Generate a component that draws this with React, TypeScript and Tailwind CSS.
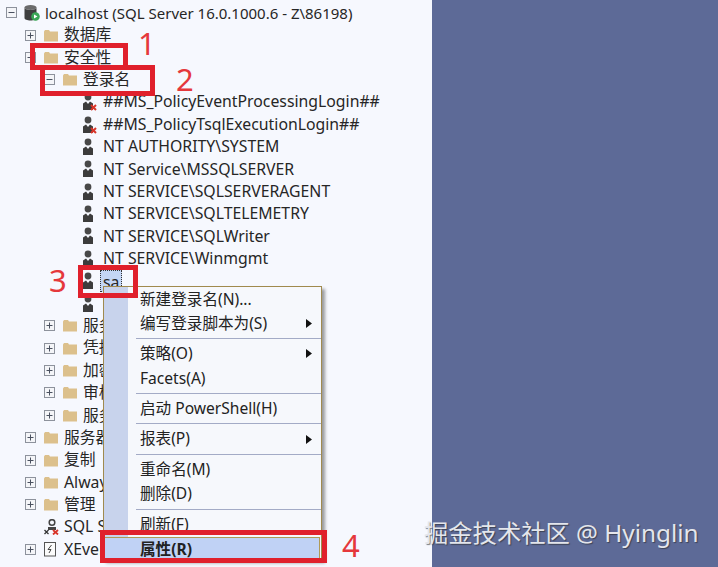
import React from 'react';

const FONT = '"Noto Sans", "Noto Sans CJK SC", sans-serif';

const Expander = ({ open }: { open: boolean }) => (
  <svg width="11" height="11" viewBox="0 0 11 11" className="shrink-0">
    <rect x="0.5" y="0.5" width="10" height="10" fill="#f4f5f8" stroke="#8d929c" />
    <path d="M2.5 5.5h6" stroke="#4a5160" />
    {!open && <path d="M5.5 2.5v6" stroke="#4a5160" />}
  </svg>
);

const Folder = () => (
  <svg width="14" height="13" viewBox="0 0 14 13" className="shrink-0">
    <path d="M0 2.5 L1 1 H5 L6 2.5 H14 V12.5 H0 Z" fill="#dcc08c" />
  </svg>
);

const UserIcon = ({ denied }: { denied?: boolean }) => (
  <svg width="16" height="18" viewBox="0 0 16 18" className="shrink-0">
    <circle cx="7" cy="4" r="3.4" fill="#484848" />
    <path d="M2 17V10.5 L5 8.5 L7 11 L9 8.5 L12 10.5 V17 Z" fill="#3c3c3c" />
    {denied && <path d="M10 12l5 5M15 12l-5 5" stroke="#d8352a" strokeWidth="2" />}
  </svg>
);

const ServerIcon = () => (
  <svg width="16" height="17" viewBox="0 0 16 17" className="shrink-0">
    <ellipse cx="6.500" cy="3.500" rx="6" ry="2.500" fill="#6b6b6b" />
    <path d="M0.500 3.500V14c0 1.400 2.700 2.500 6 2.500s6-1.100 6-2.500V3.500c0 1.400-2.700 2.500-6 2.500S0.500 4.900 0.500 3.500Z" fill="#3f3f3f" />
    <circle cx="11.500" cy="12.500" r="4.300" fill="#3aa655" />
    <path d="M10 10.400v4.200l3.500-2.100Z" fill="#fff" />
  </svg>
);

const AgentIcon = () => (
  <svg width="15" height="16" viewBox="0 0 15 16" className="shrink-0">
    <circle cx="8" cy="3.500" r="2.800" fill="none" stroke="#444" strokeWidth="1.500" />
    <path d="M4 8h8v3H4Z" fill="#444" />
    <path d="M0.500 11l4 4M4.500 11l-4 4" stroke="#333" strokeWidth="1.300" />
    <path d="M9 11l5 4.500M14 11l-5 4.500" stroke="#d8352a" strokeWidth="1.800" />
  </svg>
);

const XEventIcon = () => (
  <svg width="13" height="15" viewBox="0 0 13 15" className="shrink-0">
    <rect x="0.500" y="0.500" width="11" height="13.500" fill="#fbfbfb" stroke="#555" />
    <path d="M7.500 3L4 7.500h3L5 11" fill="none" stroke="#444" />
  </svg>
);

type Node = {
  label: string;
  indent: number;
  kind: 'server' | 'folder' | 'user' | 'denied' | 'agent' | 'xevent';
  open?: boolean;
  selected?: boolean;
};

const nodes: Node[] = [
  { label: 'localhost (SQL Server 16.0.1000.6 - Z\\86198)', indent: 6, kind: 'server', open: true },
  { label: '数据库', indent: 25, kind: 'folder', open: false },
  { label: '安全性', indent: 25, kind: 'folder', open: true },
  { label: '登录名', indent: 44, kind: 'folder', open: true },
  { label: '##MS_PolicyEventProcessingLogin##', indent: 81, kind: 'denied' },
  { label: '##MS_PolicyTsqlExecutionLogin##', indent: 81, kind: 'denied' },
  { label: 'NT AUTHORITY\\SYSTEM', indent: 81, kind: 'user' },
  { label: 'NT Service\\MSSQLSERVER', indent: 81, kind: 'user' },
  { label: 'NT SERVICE\\SQLSERVERAGENT', indent: 81, kind: 'user' },
  { label: 'NT SERVICE\\SQLTELEMETRY', indent: 81, kind: 'user' },
  { label: 'NT SERVICE\\SQLWriter', indent: 81, kind: 'user' },
  { label: 'NT SERVICE\\Winmgmt', indent: 81, kind: 'user' },
  { label: 'sa', indent: 81, kind: 'user', selected: true },
  { label: '', indent: 81, kind: 'user' },
  { label: '服务器角色', indent: 44, kind: 'folder', open: false },
  { label: '凭据', indent: 44, kind: 'folder', open: false },
  { label: '加密提供程序', indent: 44, kind: 'folder', open: false },
  { label: '审核', indent: 44, kind: 'folder', open: false },
  { label: '服务器审核规范', indent: 44, kind: 'folder', open: false },
  { label: '服务器对象', indent: 25, kind: 'folder', open: false },
  { label: '复制', indent: 25, kind: 'folder', open: false },
  { label: 'Always On 高可用性', indent: 25, kind: 'folder', open: false },
  { label: '管理', indent: 25, kind: 'folder', open: false },
  { label: 'SQL Server 代理', indent: 44, kind: 'agent' },
  { label: 'XEvent 探查器', indent: 25, kind: 'xevent', open: false },
];

const TreeRow = ({ node }: { node: Node }) => {
  return (
    <div className="flex items-center h-[22.36px] whitespace-nowrap" style={{ paddingLeft: node.indent }}>
      {node.open !== undefined && (
        <span className="mr-2">
          <Expander open={node.open} />
        </span>
      )}
      {node.kind === 'server' && <span className="mr-[5px] -ml-[1px]"><ServerIcon /></span>}
      {node.kind === 'folder' && <span className="mr-[6px]"><Folder /></span>}
      {(node.kind === 'user' || node.kind === 'denied') && (
        <span className="mr-[6px]"><UserIcon denied={node.kind === 'denied'} /></span>
      )}
      {node.kind === 'agent' && <span className="mr-[5px]"><AgentIcon /></span>}
      {node.kind === 'xevent' && <span className="mr-[7px]"><XEventIcon /></span>}
      {node.selected ? (
        <span className="-ml-[3px] px-[2px] h-[22px] leading-[22px] bg-[#c4d6f5] border border-dotted border-[#333]">{node.label}</span>
      ) : (
        <span className={node.kind === 'server' ? 'text-[15px]' : ''}>{node.label}</span>
      )}
    </div>
  );
};

const MenuItem = ({ label, arrow, bold }: { label: string; arrow?: boolean; bold?: boolean }) => (
  <div className={`flex items-center justify-between h-[24.4px] pl-[36px] pr-[9px] ${bold ? 'font-bold' : ''}`}>
    <span>{label}</span>
    {arrow && (
      <svg width="6" height="9" viewBox="0 0 6 9">
        <path d="M0 0l6 4.500L0 9Z" fill="#111" />
      </svg>
    )}
  </div>
);

const Sep = () => (
  <div className="h-[6px] flex items-center pl-[32px]">
    <div className="w-full h-px bg-[#a3abc6]" />
  </div>
);

const ContextMenu = () => (
  <div className="absolute left-[103px] top-[286px] w-[219px] h-[274px] border border-[#a08a4e] bg-[#f6f8fc] shadow-[3px_3px_3px_rgba(40,40,40,0.45)] text-[15.6px] text-[#222]">
    <div className="absolute left-0 top-0 bottom-0 w-[24px] bg-[#c8d3ec]" />
    <div className="relative">
      <MenuItem label="新建登录名(N)..." />
      <MenuItem label="编写登录脚本为(S)" arrow />
      <Sep />
      <MenuItem label="策略(O)" arrow />
      <MenuItem label="Facets(A)" />
      <Sep />
      <MenuItem label="启动 PowerShell(H)" />
      <Sep />
      <MenuItem label="报表(P)" arrow />
      <Sep />
      <MenuItem label="重命名(M)" />
      <MenuItem label="删除(D)" />
      <Sep />
      <MenuItem label="刷新(F)" />
      <div className="bg-[#c0d2f5] border border-[#b09a55] -ml-px mr-px">
        <MenuItem label="属性(R)" bold />
      </div>
    </div>
  </div>
);

const App = () => {
  return (
    <div className="relative flex w-[718px] h-[567px] overflow-hidden" style={{ fontFamily: FONT }}>
      <div className="w-[432px] shrink-0 bg-[#f6f8fe] pt-[1.7px] text-[15.8px] text-[#262626]">
        {nodes.map((node, i) => (
          <TreeRow key={i} node={node} />
        ))}
      </div>
      <div className="flex-1 bg-[#5d6a97]" />

      <ContextMenu />

      {/* red annotations */}
      <div className="absolute left-[30px] top-[43px] w-[98px] h-[27px] border-[5px] border-[#e0202c]" />
      <div className="absolute left-[40px] top-[65px] w-[115px] h-[31px] border-[5px] border-[#e0202c]" />
      <div className="absolute left-[78px] top-[265px] w-[60px] h-[33px] border-[5px] border-[#e0202c]" />
      <div className="absolute left-[100px] top-[530px] w-[227px] h-[33px] border-[5px] border-[#e0202c]" />
      <span className="absolute left-[138px] top-[23px] text-[31px] leading-[40px] text-[#e5383c]">1</span>
      <span className="absolute left-[176px] top-[59px] text-[31px] leading-[40px] text-[#e5383c]">2</span>
      <span className="absolute left-[49px] top-[260px] text-[31px] leading-[40px] text-[#e5383c]">3</span>
      <span className="absolute left-[342px] top-[525px] text-[31px] leading-[40px] text-[#e5383c]">4</span>

      <span className="absolute left-[424px] top-[516px] text-[24.3px] leading-[34px] whitespace-nowrap text-[#e4e6ec] [text-shadow:1px_1px_1px_rgba(40,40,40,0.6)]">
        掘金技术社区 @ Hyinglin
      </span>
    </div>
  );
};

export default App;
